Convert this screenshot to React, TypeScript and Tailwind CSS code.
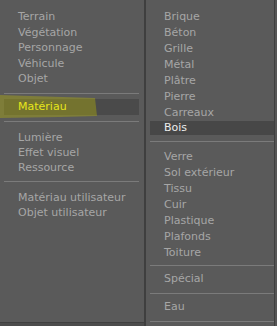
import React from "react";

const font = { fontFamily: '"DejaVu Sans", Verdana, sans-serif' };

function Sep({ cls }: { cls: string }) {
  return <div className={`h-px bg-[#7b7b7b] ${cls}`} />;
}

export default function App() {
  const leftA = ["Terrain", "Végétation", "Personnage", "Véhicule", "Objet"];
  const leftB = ["Lumière", "Effet visuel", "Ressource"];
  const leftC = ["Matériau utilisateur", "Objet utilisateur"];
  const rightA = ["Brique", "Béton", "Grille", "Métal", "Plâtre", "Pierre", "Carreaux"];
  const rightB = ["Verre", "Sol extérieur", "Tissu", "Cuir", "Plastique", "Plafonds"];
  return (
    <div
      className="w-[277px] h-[326px] bg-[#5a5a5a] flex text-[11px] text-[#a6a6a6] overflow-hidden"
      style={font}
    >
      {/* left panel */}
      <div className="w-[144px] h-full flex flex-col">
        <div className="flex-1 relative flex flex-col pt-[9px]">
          {leftA.map((t) => (
            <div key={t} className="h-[15.5px] leading-[15.5px] pl-[18px] whitespace-nowrap">{t}</div>
          ))}
          <Sep cls="mt-[6px] ml-[4px] mr-[5px]" />
          <div className="mt-[5px] ml-[4px] mr-[5px] h-[16px] leading-[16px] pl-[14px] bg-[#4a4a4a] text-[#e6e61a] relative">
            <svg className="absolute left-[-4px] top-[-4px]" width="100" height="24" viewBox="0 0 100 24">
              <polygon points="0,0 30,1 95,3 97,21 60,22 0,23" fill="#c0bc00" opacity="0.36" />
            </svg>
            <span className="relative">Matériau</span>
          </div>
          <Sep cls="mt-[6px] ml-[4px] mr-[5px]" />
          <div className="mt-[8px] flex flex-col">
            {leftB.map((t) => (
              <div key={t} className="h-[15px] leading-[15px] pl-[18px] whitespace-nowrap">{t}</div>
            ))}
          </div>
          <Sep cls="mt-[6px] ml-[4px] mr-[5px]" />
          <div className="mt-[8px] flex flex-col">
            {leftC.map((t) => (
              <div key={t} className="h-[15px] leading-[15px] pl-[18px] whitespace-nowrap">{t}</div>
            ))}
          </div>
        </div>
        <div className="h-px bg-[#404040]" />
        <div className="h-[3px] bg-[#4c4c4c]" />
      </div>
      {/* divider */}
      <div className="w-[2px] h-full bg-[#3f3f3f]" />
      {/* right panel */}
      <div className="w-[128px] h-full flex flex-col pt-[9px]">
        {rightA.map((t) => (
          <div key={t} className="h-[16px] leading-[16px] pl-[18px] whitespace-nowrap">{t}</div>
        ))}
        <div className="h-[14px] leading-[14px] ml-[4px] pl-[14px] bg-[#474747] text-[#ececec]">Bois</div>
        <Sep cls="mt-[6px] ml-[4px]" />
        <div className="mt-[7px] flex flex-col">
          {rightB.map((t) => (
            <div key={t} className="h-[16px] leading-[16px] pl-[18px] whitespace-nowrap">{t}</div>
          ))}
          <div className="h-[15px] leading-[15px] pl-[18px]">Toiture</div>
        </div>
        <Sep cls="mt-[5px] ml-[4px]" />
        <div className="mt-[5px] h-[16px] leading-[16px] pl-[18px]">Spécial</div>
        <Sep cls="mt-[6px] ml-[4px]" />
        <div className="mt-[5px] h-[16px] leading-[16px] pl-[18px]">Eau</div>
        <Sep cls="mt-[6px] ml-[4px]" />
      </div>
      <div className="w-px h-full bg-[#3f3f3f]" />
      <div className="flex-1 h-full bg-[#555555]" />
    </div>
  );
}
